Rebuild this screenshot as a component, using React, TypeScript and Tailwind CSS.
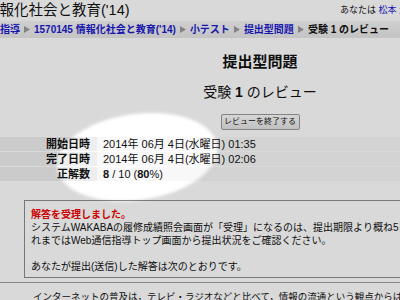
import React from 'react'

const crumbs = ['指導', '1570145 情報化社会と教育(\'14)', '小テスト', '提出型問題']

function Arrow() {
  return (
    <svg width="6" height="7" viewBox="0 0 6 7" className="mx-[4px] shrink-0">
      <path d="M0 0 L6 3.5 L0 7 Z" fill="#9a9a9a" />
    </svg>
  )
}

const rows: { label: string; value: React.ReactNode }[] = [
  { label: '開始日時', value: '2014年 06月 4日(水曜日) 01:35' },
  { label: '完了日時', value: '2014年 06月 4日(水曜日) 02:06' },
  { label: '正解数', value: <><b>8</b> / 10 (<b>80</b>%)</> },
]

export default function App() {
  return (
    <div className="relative w-[400px] h-[300px] overflow-hidden bg-white text-[#111] font-['Liberation_Sans','Noto_Sans_CJK_JP',sans-serif]">
      <header className="flex h-[21px] whitespace-nowrap">
        <div className="w-[340px] shrink-0 overflow-hidden">
          <h1 className="-ml-[15px] text-[14.5px] leading-[20px]">情報化社会と教育('14)</h1>
        </div>
        <div className="text-[9px] leading-[20px]">
          あなたは <a className="text-[#1a1acc]">松本 量子</a> としてログインしています。
        </div>
      </header>

      <nav className="flex h-[17px] items-center whitespace-nowrap bg-linear-to-b from-[#f3f3f3] to-[#e6e6e6] text-[10px] font-bold">
        {crumbs.map(c => (
          <React.Fragment key={c}>
            <a className="text-[#1a1acc]">{c}</a>
            <Arrow />
          </React.Fragment>
        ))}
        <span className="text-[#111]">受験 1 のレビュー</span>
      </nav>

      <div className="flex w-[520px] flex-col items-center">
        <h2 className="mt-[14px] text-[15px] font-bold leading-[20px]">提出型問題</h2>
        <h3 className="mt-[10px] text-[14px] leading-[20px]">受験 <b>1</b> のレビュー</h3>
        <button className="mt-[12px] h-[16px] w-[79px] rounded-[2px] border border-[#9a9a9a] bg-linear-to-b from-[#fbfbfb] to-[#e2e2e2] text-[8px] leading-[14px] text-[#111]">
          レビューを終了する
        </button>
      </div>

      <div className="mt-[6px] border-b border-white">
        {rows.map(r => (
          <div key={r.label} className="flex h-[15px] border-t border-white text-[11px] leading-[14px]">
            <div className="w-[97px] bg-[#eeeeee] pr-[7px] text-right font-bold">{r.label}</div>
            <div className="flex-1 bg-[#f8f8f8] pl-[6px] whitespace-nowrap">{r.value}</div>
          </div>
        ))}
      </div>

      <div className="mt-[18px] ml-[24px] w-[420px] border border-[#8c8c8c] pt-[7px] pb-[4px] pl-[6px] text-[10px] leading-[13px] whitespace-nowrap">
        <p className="font-bold text-[#ee0000]">解答を受理しました。</p>
        <p>システムWAKABAの履修成績照会画面が「受理」になるのは、提出期限より概ね5日後です。そ</p>
        <p>れまではWeb通信指導トップ画面から提出状況をご確認ください。</p>
        <p className="h-[13px]"></p>
        <p>あなたが提出(送信)した解答は次のとおりです。</p>
      </div>

      <div className="mt-[4px] border-t border-[#a0a0a0] pt-[7px] pl-[33px] text-[9.5px] leading-[13px] whitespace-nowrap">
        インターネットの普及は，テレビ・ラジオなどと比べて，情報の流通という観点からは
      </div>

      <div className="pointer-events-none absolute left-[56px] top-[114px] h-[86px] w-[162px] -rotate-[8deg] rounded-[50%] shadow-[0_0_0_2000px_rgba(0,0,0,0.15)] blur-[1.5px]" />
    </div>
  )
}
